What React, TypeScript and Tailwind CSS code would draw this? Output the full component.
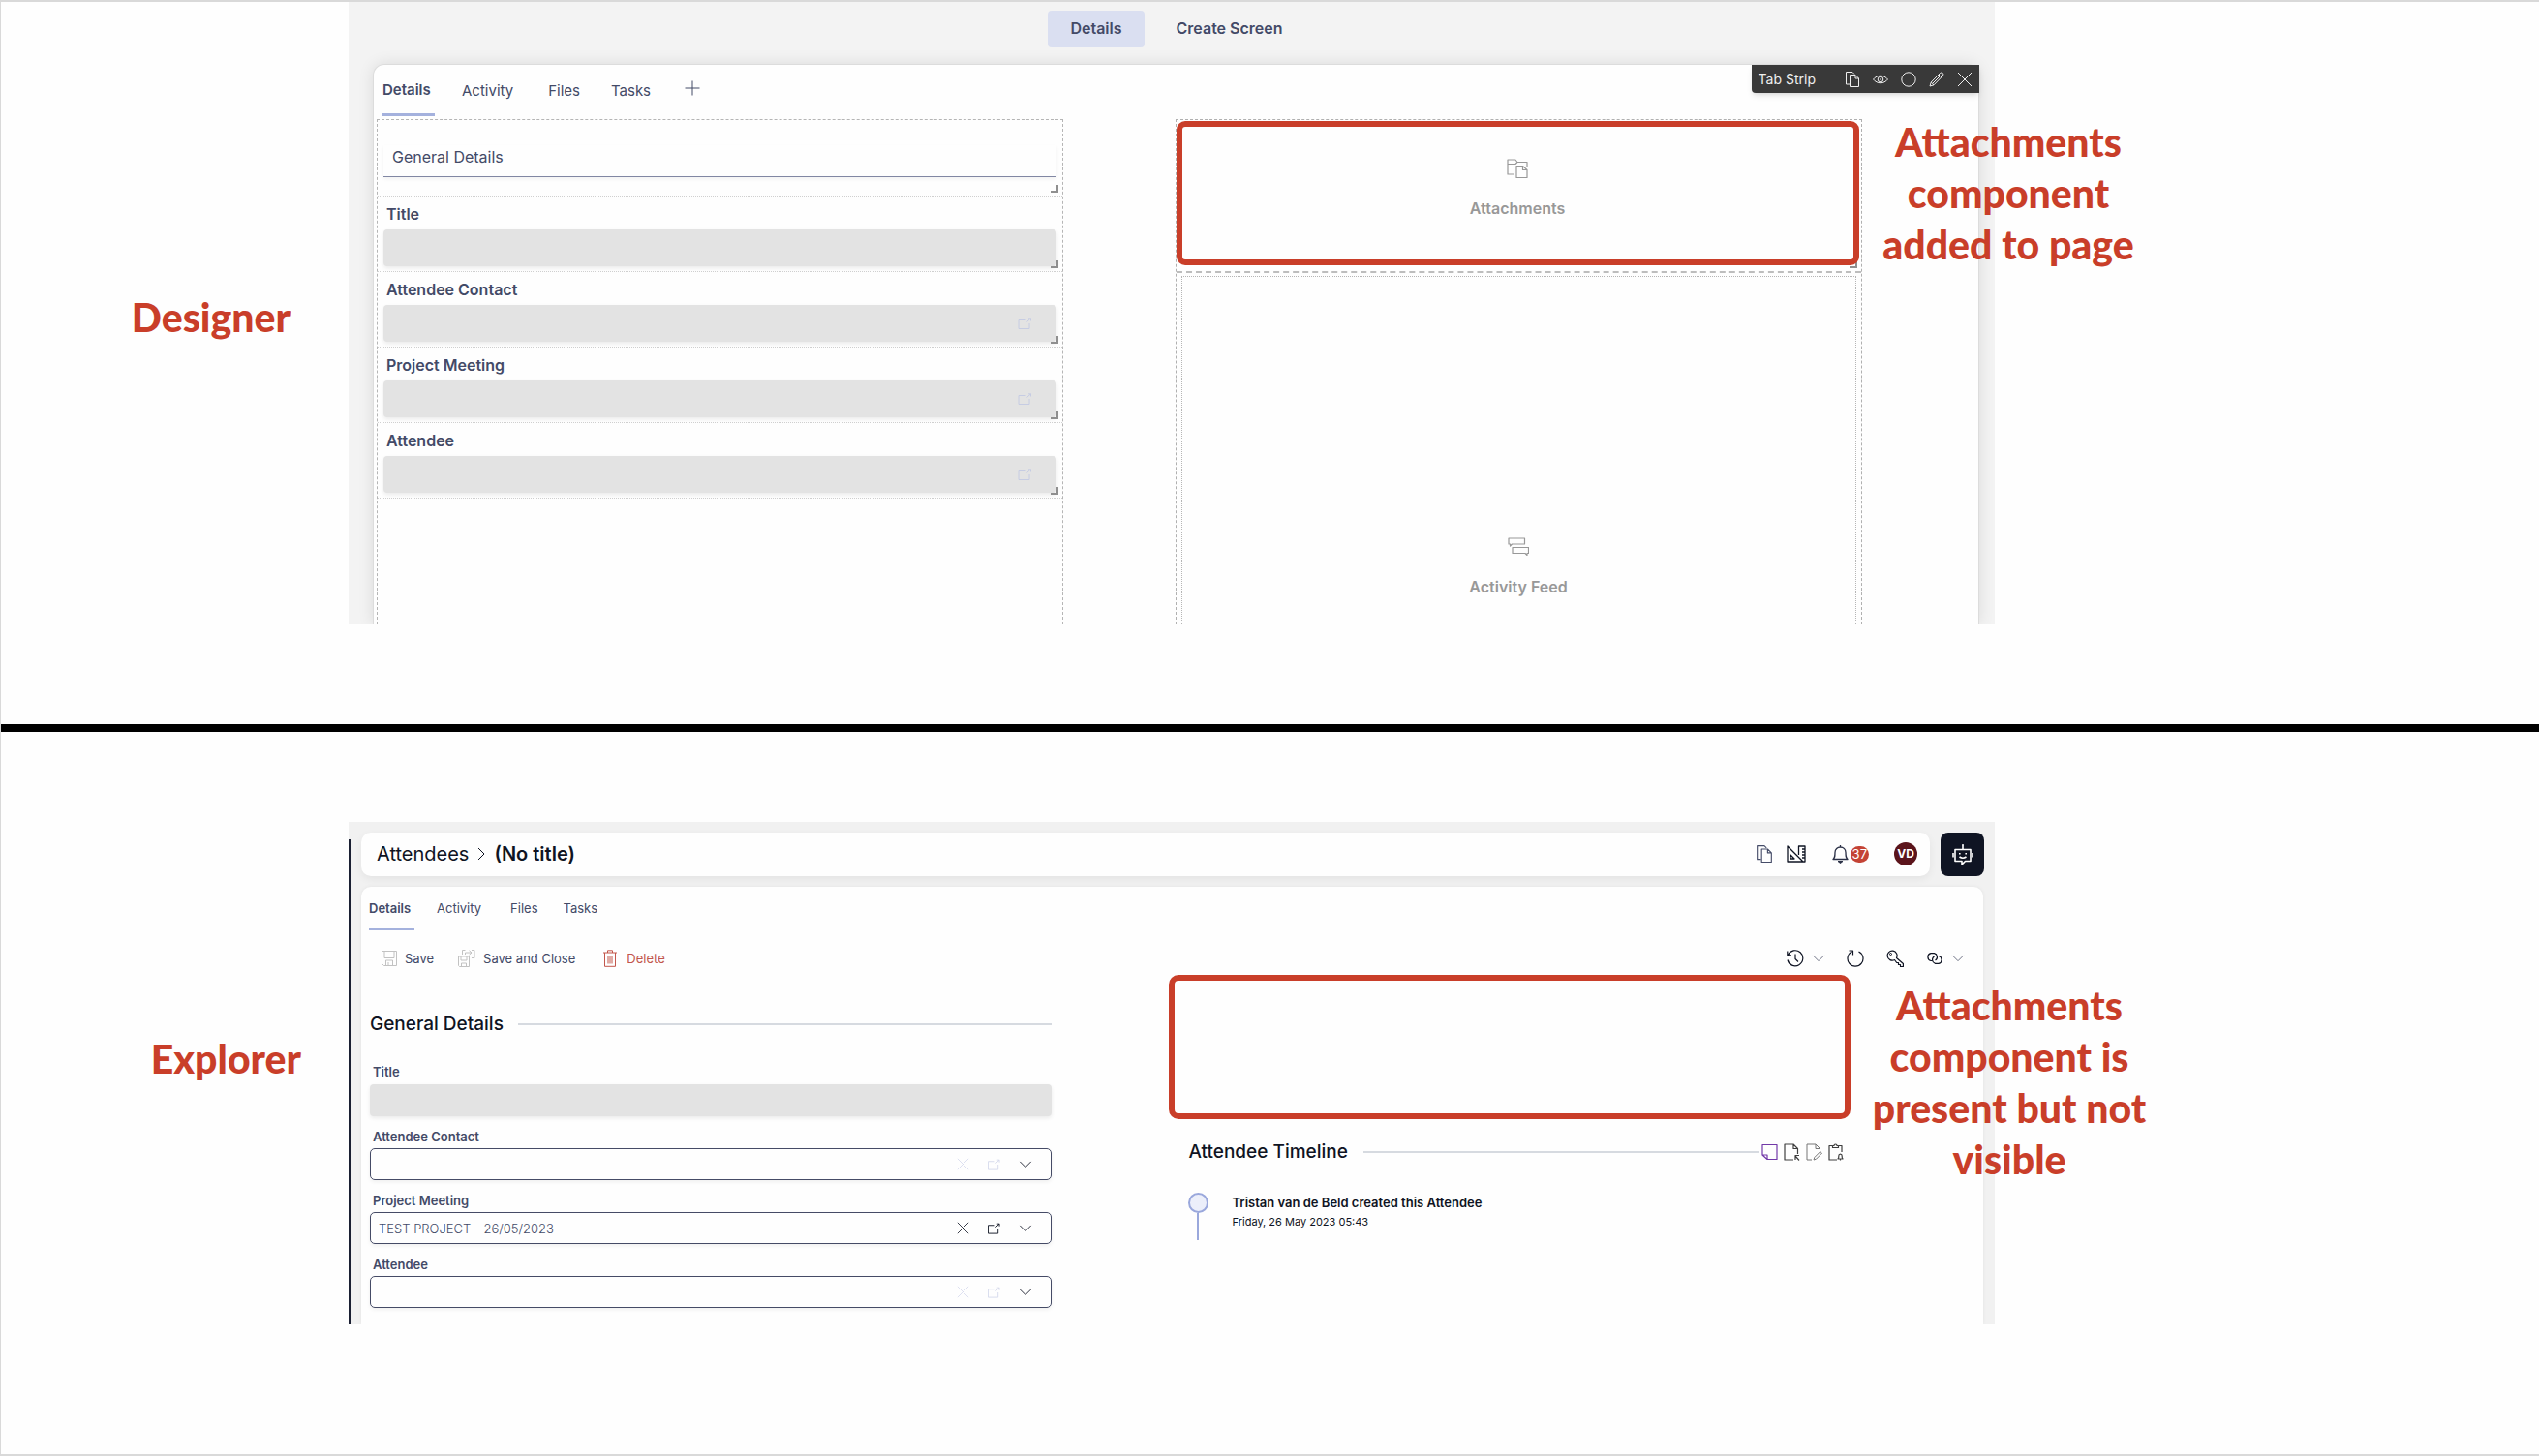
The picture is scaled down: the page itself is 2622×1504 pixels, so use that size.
import React from "react";

type IconProps = { className?: string };

function Icon({
  className = "size-4",
  box = "0 0 16 16",
  children,
}: IconProps & { box?: string; children: React.ReactNode }) {
  return (
    <svg
      viewBox={box}
      className={`shrink-0 ${className}`}
      fill="none"
      stroke="currentColor"
      strokeWidth="1"
      strokeLinejoin="round"
      aria-hidden="true"
    >
      {children}
    </svg>
  );
}

const CopyIcon = ({ className }: IconProps) => (
  <Icon className={className}>
    <path d="M5 13H1.5V.5h6.5l2 2" />
    <path d="M5.5 3.5h5.500l3.500 3.500v8.500h-9zM11 3.500v3.500h3.500" />
  </Icon>
);
const EyeIcon = ({ className }: IconProps) => (
  <Icon className={className}>
    <path d="M.5 8c4-5 11-5 15 0-4 5-11 5-15 0z" />
    <circle cx="8" cy="8" r="2.800" />
    <path d="M8 7v2" />
  </Icon>
);
const CircleIcon = ({ className }: IconProps) => (
  <Icon className={className}>
    <circle cx="8" cy="8" r="7.200" />
  </Icon>
);
const PencilIcon = ({ className }: IconProps) => (
  <Icon className={className}>
    <path d="M1 15l1.200-4L11.500 1.500q1.500-1.200 2.800 0t0 2.800L5 13.800zM2.200 11L5 13.800M10 3l3 3M4 12l7.500-7.500" />
  </Icon>
);
const CloseIcon = ({ className }: IconProps) => (
  <Icon className={className}>
    <path d="M1 1l14 14M15 1L1 15" />
  </Icon>
);
const PlusIcon = ({ className }: IconProps) => (
  <Icon className={className}>
    <path d="M8 .5v15M.5 8h15" />
  </Icon>
);
const OpenIcon = ({ className }: IconProps) => (
  <Icon className={className} box="0 0 14 12">
    <path d="M8 2.500H.5v9h11V6M9 4.500L13 .8M10.500 .8H13V3.500" />
  </Icon>
);
const ChevronDown = ({ className }: IconProps) => (
  <Icon className={className}>
    <path d="M1.500 4.500L8 11l6.500-6.500" />
  </Icon>
);
const ChevronRight = ({ className }: IconProps) => (
  <Icon className={className} box="0 0 8 14">
    <path d="M1 1l6 6-6 6" />
  </Icon>
);
const FolderFileIcon = ({ className }: IconProps) => (
  <Icon className={className} box="0 0 22 20">
    <path strokeWidth="1.200" d="M8 16H1V1h8l2 2.500h10V8M1 5.500h8l2-2" />
    <path strokeWidth="1.200" d="M10 7.500h6.500l4.500 4v8H10zM16.500 7.500v4H21" />
  </Icon>
);
const FeedIcon = ({ className }: IconProps) => (
  <Icon className={className} box="0 0 22 20">
    <path strokeWidth="1.200" d="M1 1h16.500v6H4.500L2.500 9V7H1z" />
    <path strokeWidth="1.200" d="M5 10.500h16.500v6H20v2l-2-2H5z" />
  </Icon>
);
const RulerIcon = ({ className }: IconProps) => (
  <Icon className={className} box="0 0 20 18">
    <path strokeWidth="1.300" d="M1 1v16h16zM4 10v4h4zM12.500 10V1H19v16h-2M19 4h-3M19 7h-3M19 10h-3M19 13h-3" />
  </Icon>
);
const BellIcon = ({ className }: IconProps) => (
  <Icon className={className} box="0 0 17 20">
    <path strokeWidth="1.300" d="M1 15.500c2-2 2-3 2-7 0-3.500 2.500-5.500 5.500-5.500S14 5 14 8.500c0 4 0 5 2 7zM8.500 3V1" />
    <path d="M6 17.500h5L8.500 19.500z" fill="currentColor" />
  </Icon>
);
const RobotIcon = ({ className }: IconProps) => (
  <Icon className={className} box="0 0 22 24">
    <g strokeWidth="1.600">
      <path d="M3 6.500h16v12h-5.500L10 22v-3.500H3zM11 6V2.500M1 10v4.500M21 10v4.500M7.500 14q3.500 2.500 7 0" />
      <circle cx="11" cy="2" r="1" fill="currentColor" stroke="none" />
      <path d="M7 10.800h1.600M13.400 10.800h1.600" />
    </g>
  </Icon>
);
const SaveIcon = ({ className }: IconProps) => (
  <Icon className={className}>
    <path d="M.5 .5h15v15H2.500l-2-2zM3 .5v7h10v-7M4.500 15.500V10h7v5.500M7 12v3.500" />
  </Icon>
);
const SaveCloseIcon = ({ className }: IconProps) => (
  <Icon className={className} box="0 0 18 18">
    <path d="M.5 7h11v10.500h-10l-1-1zM3 7v4h6V7M3.500 17.500V14h5v3.500" />
    <path d="M4.500 5V.5h3M14 .5h3v8h-3M7.500 5V3H14M11.500 .8L14 3l-2.500 2.200" />
  </Icon>
);
const TrashIcon = ({ className }: IconProps) => (
  <Icon className={className} box="0 0 14 18">
    <path d="M0 3h14M4.500 3V.8h5V3M1.500 3v14.300h11V3M5 6v8.500M7 6v8.500M9 6v8.500" />
  </Icon>
);
const HistoryIcon = ({ className }: IconProps) => (
  <Icon className={className} box="0 0 18 18">
    <path strokeWidth="1.200" d="M1.500 5.500A8 8 0 1 1 1 10.500M.8 1.500v4.300H5M9 4.500V9.500l3 3" />
  </Icon>
);
const RefreshIcon = ({ className }: IconProps) => (
  <Icon className={className} box="0 0 18 18">
    <path strokeWidth="1.200" d="M5.500 2A8 8 0 1 0 12.500 2M2.500 1h4v4.500" />
  </Icon>
);
const KeyIcon = ({ className }: IconProps) => (
  <Icon className={className} box="0 0 18 18">
    <path strokeWidth="1.200" d="M8.500 10.500A5 5 0 1 1 10.500 8.500L17.400 14.500v3H14.500v-2h-2v-2h-1.800z" />
    <circle cx="4.500" cy="4.500" r="1" />
  </Icon>
);
const LinkIcon = ({ className }: IconProps) => (
  <Icon className={className} box="0 0 18 18">
    <g strokeWidth="1.200">
      <path d="M6.500 11.500H5A4 4 0 0 1 5 3.700H8.500A4 4 0 0 1 9.500 11" />
      <path d="M11.500 6.500H13A4 4 0 0 1 13 14.300H9.500A4 4 0 0 1 8.500 7" />
    </g>
  </Icon>
);
const NoteIcon = ({ className }: IconProps) => (
  <Icon className={className} box="0 0 17 18">
    <path strokeWidth="1.200" d="M1 1.500h15v15H6L1 12zM1 12h5v4.500" />
  </Icon>
);
const FileArrowIcon = ({ className }: IconProps) => (
  <Icon className={className} box="0 0 17 18">
    <path strokeWidth="1.200" d="M10 17H1V1h9l4.500 4.500V11M10 1v4.500h4.500M16 17.500L12 13M12 17v-4.500h4" />
  </Icon>
);
const FileEditIcon = ({ className }: IconProps) => (
  <Icon className={className} box="0 0 17 18">
    <path d="M6 17H1V1h9l4.500 4.500V7.500M10 1v4.500h4.500M8 17l.8-2.500 6-6 1.700 1.700-6 6z" />
  </Icon>
);
const ClipboardIcon = ({ className }: IconProps) => (
  <Icon className={className} box="0 0 17 18">
    <path strokeWidth="1.200" d="M4 2.500H1v14.500h8M11 2.500h3V9M4.500 4.500V2.500H6a1.500 1.500 0 0 1 3 0h1.500v2zM10 16c1-1 .8-2 .8-3 0-2.600 3.400-2.600 3.400 0 0 1-.2 2 .8 3zM12.500 16v1.500" />
  </Icon>
);

const DESIGNER_FIELDS = [
  { id: "d-title", label: "Title", lookup: false },
  { id: "d-contact", label: "Attendee Contact", lookup: true },
  { id: "d-meeting", label: "Project Meeting", lookup: true },
  { id: "d-attendee", label: "Attendee", lookup: true },
];

const EXPLORER_LOOKUPS = [
  { id: "e-contact", label: "Attendee Contact", value: "" },
  { id: "e-meeting", label: "Project Meeting", value: "TEST PROJECT - 26/05/2023" },
  { id: "e-attendee", label: "Attendee", value: "" },
];

function ResizeCorner() {
  return (
    <span className="absolute right-1 bottom-[3px] size-2 border-r-2 border-b-2 border-[#8f8f8f]" />
  );
}

function Callout({ className = "", children }: { className?: string; children: React.ReactNode }) {
  return (
    <p className={`font-['Lato',sans-serif] text-[41px] leading-[53px] font-black text-[#c93e29] ${className}`}>
      {children}
    </p>
  );
}

function Placeholder({ icon, label }: { icon: React.ReactNode; label: string }) {
  return (
    <div className="flex flex-col items-center gap-[19px] text-[#989898]">
      {icon}
      <span className="text-base leading-6 font-semibold">{label}</span>
    </div>
  );
}

function DesignerTabs() {
  return (
    <nav className="flex h-[53px] items-stretch gap-7 pl-[6px] text-[15px] leading-5">
      <button className="w-[54px] border-b-[3px] border-[#a4b1dd] pt-[1px] text-left font-semibold">Details</button>
      <button>Activity</button>
      <button className="pl-2">Files</button>
      <button className="pl-1">Tasks</button>
      <button aria-label="Add tab" className="pb-[5px] pl-[7px]">
        <PlusIcon className="size-4" />
      </button>
    </nav>
  );
}

function Designer() {
  const tools = [
    { name: "Copy", icon: <CopyIcon className="size-4" /> },
    { name: "Show", icon: <EyeIcon className="size-4" /> },
    { name: "State", icon: <CircleIcon className="size-4" /> },
    { name: "Edit", icon: <PencilIcon className="size-4" /> },
    { name: "Close", icon: <CloseIcon className="size-4" /> },
  ];
  return (
    <div className="overflow-hidden bg-[#f3f3f3]">
      <div className="flex justify-center gap-[10px] pt-[9px] pb-[17px] pl-[10px] text-base leading-[22px] font-semibold">
        <button className="rounded bg-[#dadff1] px-[23px] pt-[7px] pb-[9px]">Details</button>
        <button className="px-[23px] pt-[7px] pb-[9px]">Create Screen</button>
      </div>
      <div className="relative mr-4 ml-[25px] rounded-t-xl border border-b-0 border-[#dcdcdc] bg-[#fefefe] px-[3px] shadow-[0_0_16px_rgba(0,0,0,0.10)]">
        <div className="absolute top-0 -right-px flex h-[29px] items-center rounded-bl bg-[#393939] pr-[7px] pl-[7px] text-[#efefef] shadow-md">
          <span className="pr-[30px] text-sm leading-5">Tab Strip</span>
          <div className="flex gap-[13px]">
            {tools.map((t) => (
              <button key={t.name} aria-label={t.name}>
                {t.icon}
              </button>
            ))}
          </div>
        </div>
        <DesignerTabs />
        <div className="mt-[3px] grid grid-cols-2 pr-[2px]">
          <div className="h-[522px] w-[86%] border border-b-0 border-dashed border-[#b5b5b5]">
            <div className="relative h-[79px] border-b border-dotted border-[#d0d0d0] px-[6px] pt-[26px]">
              <h2 className="h-[33px] border-b border-[#8187a3] pl-[9px] text-base leading-6 shadow-[0_2px_4px_rgba(0,0,0,0.05)]">
                General Details
              </h2>
              <ResizeCorner />
            </div>
            {DESIGNER_FIELDS.map((f) => (
              <div key={f.id} className="relative h-[78px] border-b border-dotted border-[#d0d0d0] px-[6px] pt-2">
                <label htmlFor={f.id} className="block pb-[6px] pl-[3px] text-base leading-5 font-semibold">
                  {f.label}
                </label>
                <div className="flex h-[38px] items-center rounded bg-[#e3e3e3] pr-[25px] shadow-[0_2px_4px_rgba(0,0,0,0.08)]">
                  <input id={f.id} disabled className="h-full min-w-0 flex-1 px-3" />
                  {f.lookup && (
                    <button aria-label={`Open ${f.label}`} className="text-[#c6cce3]">
                      <OpenIcon className="h-3 w-[15px]" />
                    </button>
                  )}
                </div>
                <ResizeCorner />
              </div>
            ))}
          </div>
          <div className="h-[522px] w-[86%] border border-b-0 border-dashed border-[#b0b0b0]">
            <div className="relative h-[158px] border-b-2 border-dashed border-[#bdbdbd] pr-[2px] pt-px pb-[6px]">
              <ResizeCorner />
              <div className="relative flex h-[149px] justify-center rounded-[9px] border-[6px] border-[#c93e29] bg-[#fefefe] pt-[33px]">
                <Placeholder icon={<FolderFileIcon className="h-5 w-[22px]" />} label="Attachments" />
              </div>
            </div>
            <div className="mx-[5px] mt-[3px] flex h-[360px] justify-center border border-b-0 border-dotted border-[#b5b5b5] pt-[269px]">
              <Placeholder icon={<FeedIcon className="h-5 w-[22px]" />} label="Activity Feed" />
            </div>
          </div>
        </div>
      </div>
    </div>
  );
}

function ExplorerHeader() {
  return (
    <header className="flex gap-[11px] pr-[11px] pl-[13px]">
      <div className="flex h-[45px] flex-1 items-center justify-between rounded-[10px] bg-[#fefefe] pr-[13px] pb-px pl-4 shadow-[0_3px_8px_rgba(0,0,0,0.06)]">
        <div className="flex items-center gap-[9px] text-xl leading-6 text-[#0f1423]">
          <a href="#attendees">Attendees</a>
          <ChevronRight className="h-[14px] w-2" />
          <span className="font-semibold">(No title)</span>
        </div>
        <div className="flex items-center">
          <button aria-label="Copy" className="pr-[14px] text-[#454c68]">
            <CopyIcon className="size-[18px]" />
          </button>
          <button aria-label="Design" className="pr-[14px] text-[#0f1423]">
            <RulerIcon className="h-[18px] w-5" />
          </button>
          <span className="h-[26px] w-px bg-[#c9cbd0]" />
          <button aria-label="Notifications" className="flex items-center gap-[2px] px-3 text-[#2b3147]">
            <BellIcon className="h-5 w-[17px]" />
            <span className="rounded-full bg-[#c44335] px-[2px] text-[13px] leading-[17px] text-white">37</span>
          </button>
          <span className="h-[26px] w-px bg-[#c9cbd0]" />
          <button className="ml-[13px] size-6 rounded-full bg-[#5b141b] text-xs leading-6 font-bold text-white">
            VD
          </button>
        </div>
      </div>
      <button aria-label="Assistant" className="flex size-[45px] items-center justify-center rounded-lg bg-[#0f1423] text-white">
        <RobotIcon className="h-6 w-[22px]" />
      </button>
    </header>
  );
}

function ExplorerForm() {
  return (
    <div className="w-[85.4%] pl-px">
      <div className="flex h-10 items-center gap-[15px] pt-[13px]">
        <h2 className="text-[19px] leading-6 font-medium text-[#0f1423]">General Details</h2>
        <span className="h-[2px] flex-1 bg-[#d6dae0]" />
      </div>
      <div className="pt-[26px]">
        <label htmlFor="e-title" className="block pl-[3px] text-[13px] leading-5 font-semibold">
          Title
        </label>
        <input
          id="e-title"
          disabled
          className="mt-[3px] block h-[33px] w-full rounded bg-[#e3e3e3] px-2 shadow-[0_2px_4px_rgba(0,0,0,0.08)]"
        />
      </div>
      {EXPLORER_LOOKUPS.map((f) => (
        <div key={f.id} className="pt-[11px]">
          <label htmlFor={f.id} className="block pl-[3px] text-[13px] leading-5 font-semibold">
            {f.label}
          </label>
          <div className="mt-[2px] flex h-[33px] items-center gap-[19px] rounded-[5px] border border-[#454b66] pr-[19px] shadow-[0_2px_4px_rgba(0,0,0,0.06)]">
            <input id={f.id} defaultValue={f.value} className="h-full min-w-0 flex-1 pl-2 text-[13px] leading-5 font-light" />
            <button aria-label="Clear" className={f.value ? "text-[#0f1423]" : "text-[#d5d9ec]"}>
              <CloseIcon className="size-[13px]" />
            </button>
            <button aria-label="Open" className={f.value ? "text-[#0f1423]" : "text-[#d5d9ec]"}>
              <OpenIcon className="h-3 w-[13px]" />
            </button>
            <button aria-label="Show options" className="text-[#0f1423]">
              <ChevronDown className="size-[14px]" />
            </button>
          </div>
        </div>
      ))}
    </div>
  );
}

function Timeline() {
  return (
    <div className="w-[85.4%]">
      <div className="h-[149px] rounded-[10px] border-[6px] border-[#c93e29]" />
      <div className="flex items-center pt-[22px] pr-[6px] pl-[21px]">
        <h2 className="text-[19px] leading-6 font-medium text-[#0f1423]">Attendee Timeline</h2>
        <span className="ml-4 h-[2px] flex-1 bg-[#d6dae0]" />
        <div className="flex gap-[6px] pl-[3px] text-[#3f3f3f]">
          <button aria-label="Add note" className="text-[#7239a8]">
            <NoteIcon className="h-[18px] w-[17px]" />
          </button>
          <button aria-label="Add file">
            <FileArrowIcon className="h-[18px] w-[17px]" />
          </button>
          <button aria-label="Edit file" className="text-[#777777]">
            <FileEditIcon className="h-[18px] w-[17px]" />
          </button>
          <button aria-label="Add task">
            <ClipboardIcon className="h-[18px] w-[17px]" />
          </button>
        </div>
      </div>
      <div className="flex gap-[25px] pt-[30px] pl-[20px] text-[#0f1423]">
        <div className="flex flex-col items-center">
          <span className="size-[21px] rounded-full border-2 border-[#9aa8dc] bg-[#eceffa]" />
          <span className="h-7 w-[2px] bg-[#9aa8dc]" />
        </div>
        <div>
          <p className="text-[13px] leading-5 font-semibold">Tristan van de Beld created this Attendee</p>
          <p className="text-[11px] leading-5">Friday, 26 May 2023 05:43</p>
        </div>
      </div>
    </div>
  );
}

function Explorer() {
  return (
    <div className="relative h-[519px] overflow-hidden bg-[#f1f1f1] pt-[11px]">
      <span className="absolute top-[18px] bottom-0 left-0 w-[2px] bg-[#1b2033]" />
      <ExplorerHeader />
      <div className="mt-[11px] mr-3 ml-[13px] h-[452px] rounded-t-[10px] bg-[#fefefe] pl-2 shadow-[0_0_4px_rgba(0,0,0,0.06)]">
        <nav className="flex h-[45px] gap-[23px] text-[13px] leading-5">
          <button className="w-[47px] border-b-2 border-[#a4b1dd] text-left font-semibold">Details</button>
          <button className="pb-[2px]">Activity</button>
          <button className="pb-[2px] pl-[7px]">Files</button>
          <button className="pb-[2px] pl-[3px]">Tasks</button>
        </nav>
        <div className="flex h-[46px] items-center justify-between pt-3 pr-[19px] pl-[13px]">
          <div className="flex items-center text-[13px] leading-5">
            <button className="flex items-center gap-2 pr-[25px]">
              <SaveIcon className="size-4 text-[#c2c2c2]" />
              Save
            </button>
            <button className="flex items-center gap-2 pr-[29px]">
              <SaveCloseIcon className="size-[18px] text-[#c2c2c2]" />
              Save and Close
            </button>
            <button className="flex items-center gap-[10px] text-[#c2564b]">
              <TrashIcon className="h-[18px] w-[14px]" />
              Delete
            </button>
          </div>
          <div className="flex items-center text-[#0f1423]">
            <button aria-label="History" className="flex items-center gap-2 pr-[22px]">
              <HistoryIcon className="size-[18px]" />
              <ChevronDown className="size-[14px] text-[#5b6075]" />
            </button>
            <button aria-label="Refresh" className="pr-[23px]">
              <RefreshIcon className="size-[18px]" />
            </button>
            <button aria-label="Permissions" className="pr-[23px]">
              <KeyIcon className="size-[18px]" />
            </button>
            <button aria-label="Links" className="flex items-center gap-2">
              <LinkIcon className="size-[18px]" />
              <ChevronDown className="size-[14px] text-[#5b6075]" />
            </button>
          </div>
        </div>
        <div className="grid grid-cols-2 pr-4">
          <div className="pt-[24px]">
            <ExplorerForm />
          </div>
          <Timeline />
        </div>
      </div>
    </div>
  );
}

export default function App() {
  return (
    <main className="border-t-2 border-b-2 border-l border-[#d9d9d9] bg-[#fefefe] font-['Inter',sans-serif] text-[#434a67]">
      <section className="relative grid h-[746px] grid-cols-[359fr_1700fr_562fr] items-start">
        <Callout className="pt-[299px] pr-[60px] text-right">Designer</Callout>
        <Designer />
        <Callout className="absolute top-[118px] right-[388px] w-[320px] text-center">
          Attachments component added to page
        </Callout>
      </section>
      <div className="h-2 bg-black" />
      <section className="relative grid h-[746px] grid-cols-[359fr_1700fr_562fr] items-start pt-[93px]">
        <Callout className="pt-[218px] pr-[49px] text-right">Explorer</Callout>
        <Explorer />
        <Callout className="absolute top-[256px] right-[387px] w-[320px] text-center">
          Attachments component is present but not visible
        </Callout>
      </section>
    </main>
  );
}
